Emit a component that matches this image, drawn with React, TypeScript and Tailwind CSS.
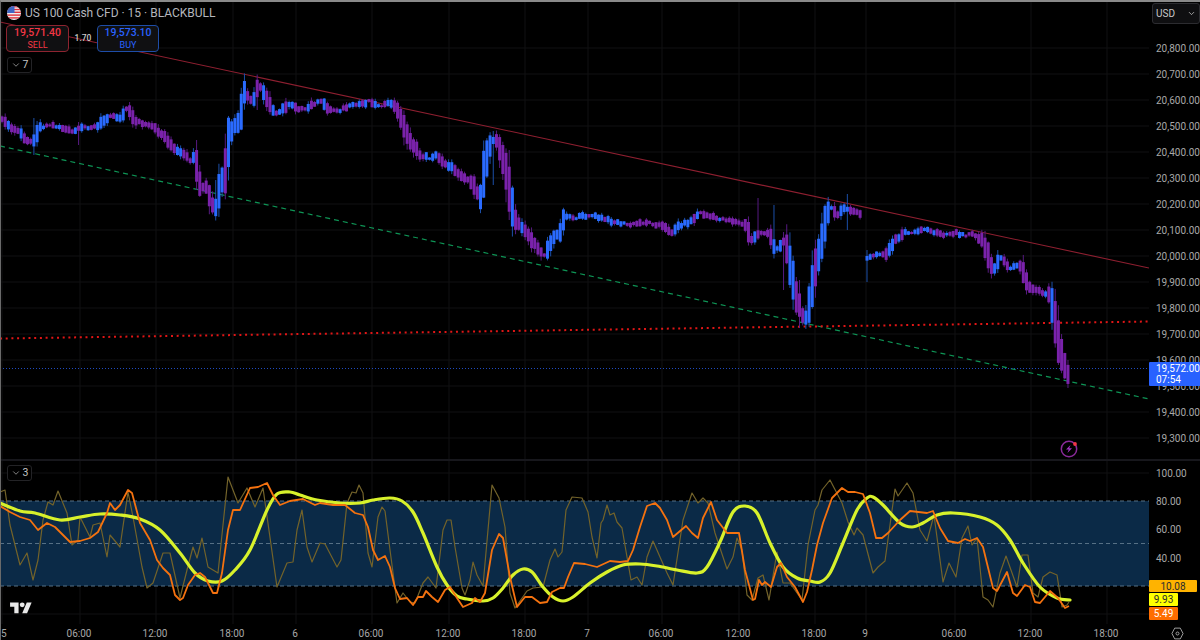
import { ChevronDown } from "lucide-react";

type Pt = [number, number];

const FONT = "font-['Roboto','Liberation_Sans',sans-serif]";

const PRICES = ["20,800.00", "20,700.00", "20,600.00", "20,500.00", "20,400.00", "20,300.00", "20,200.00", "20,100.00", "20,000.00", "19,900.00", "19,800.00", "19,700.00", "19,600.00", "19,500.00", "19,400.00", "19,300.00"];
const OSC_LABELS = ["100.00", "80.00", "60.00", "40.00"];

const TICKS: { x: number; label: string }[] = [
  { x: 2, label: "5" },
  { x: 80, label: "06:00" },
  { x: 156, label: "12:00" },
  { x: 233, label: "18:00" },
  { x: 296, label: "6" },
  { x: 372, label: "06:00" },
  { x: 449, label: "12:00" },
  { x: 525, label: "18:00" },
  { x: 588, label: "7" },
  { x: 662, label: "06:00" },
  { x: 739, label: "12:00" },
  { x: 815, label: "18:00" },
  { x: 866, label: "9" },
  { x: 955, label: "06:00" },
  { x: 1031, label: "12:00" },
  { x: 1107, label: "18:00" },
];

const PATH_A: Pt[] = [[2,119],[8,125],[14,130],[20,132],[25,138],[32,143],[40,127],[50,125],[60,127],[72,132],[85,127],[97,127],[110,115],[120,118],[127,108],[135,120],[145,125],[153,127],[165,137],[175,150],[184,155],[190,160],[195,158],[200,186],[207,188],[212,205],[216,208],[220,185],[225,175],[228,145],[232,130],[240,120],[245,90],[250,100],[255,100],[258,85],[262,90],[270,105],[274,112],[278,112],[285,108],[290,103],[298,108],[305,110],[315,103],[322,102],[330,110],[340,110],[345,108],[355,105],[365,103],[370,100],[375,105],[385,105],[392,103],[400,115],[405,130],[410,140],[420,155],[430,158],[435,155],[445,163],[455,170],[465,178],[472,182],[480,200],[485,165],[490,145],[495,138],[500,150],[505,165],[510,195],[515,220],[525,230],[535,245],[545,255],[552,240],[560,232],[565,215],[575,218],[590,215],[600,218],[615,222],[630,225],[645,222],[660,225],[672,232],[680,225],[690,222],[700,213],[715,218],[730,220],[745,225],[752,240],[760,232],[770,235],[775,250],[785,240],[790,265],[797,300],[805,320],[810,300],[815,270],[820,250],[825,225],[830,205],[838,215],[845,208],[855,212],[863,215]];
const PATH_B: Pt[] = [[867,258],[875,255],[885,255],[895,240],[905,232],[915,232],[925,230],[935,232],[945,235],[955,233],[965,235],[975,235],[982,240],[988,255],[993,272],[1000,258],[1010,268],[1020,265],[1028,285],[1040,292],[1050,295],[1055,320],[1060,350],[1066,370],[1070,381]];

const SPIKES: [number, number, number][] = [
  [35, 118, 155], [77, 122, 145], [195, 140, 190], [216, 180, 212], [258, 79, 110], [493, 131, 185], [510, 150, 220],
  [758, 198, 235], [775, 205, 258], [785, 232, 290], [801, 280, 328], [805, 305, 328], [829, 198, 225], [847, 194, 230], [848, 210, 243], [866, 250, 282], [1068, 360, 388],
];

const RED_LINE = { x1: 0, y1: 22, x2: 1149, y2: 268 };
const GREEN_LINE = { x1: 0, y1: 146, x2: 1149, y2: 399 };

const LIME: Pt[] = [[0,503],[20,511],[35,513],[60,520],[80,517],[100,514],[120,515],[140,519],[160,530],[180,553],[195,573],[208,581],[222,581],[235,570],[250,550],[267,510],[277,494],[290,492],[300,495],[317,500],[340,503],[360,503],[373,500],[390,498],[402,501],[413,512],[423,533],[437,567],[447,585],[457,596],[467,599],[483,601],[493,598],[503,588],[513,575],[523,569],[532,572],[543,587],[553,597],[563,601],[573,597],[590,583],[607,572],[623,565],[640,564],[657,566],[677,570],[697,573],[707,567],[720,542],[733,512],[745,506],[757,513],[770,543],[783,567],[797,578],[810,581],[820,582],[830,573],[843,543],[857,510],[867,498],[873,497],[883,505],[900,523],[912,527],[923,523],[937,515],[953,513],[980,517],[997,525],[1010,540],[1023,563],[1040,587],[1057,598],[1070,600]];
const ORANGE: Pt[] = [[0,506],[10,512],[20,517],[30,520],[38,530],[47,523],[55,527],[70,542],[80,541],[90,538],[98,532],[107,513],[110,503],[115,510],[120,505],[128,490],[132,493],[140,523],[150,540],[157,560],[163,568],[170,575],[175,595],[180,600],[183,598],[188,585],[195,575],[200,573],[205,577],[213,593],[217,593],[222,573],[228,530],[233,510],[240,510],[250,488],[258,487],[267,483],[273,495],[280,505],[290,501],[303,499],[315,505],[320,503],[333,505],[345,505],[355,513],[363,515],[368,527],[373,550],[378,560],[385,556],[390,567],[395,588],[400,599],[407,598],[413,605],[418,597],[423,597],[426,591],[432,597],[438,602],[445,590],[450,587],[457,598],[463,607],[472,603],[475,598],[480,602],[485,593],[492,550],[499,534],[503,538],[510,577],[517,607],[525,597],[532,597],[540,603],[547,602],[552,592],[560,588],[564,588],[568,577],[574,563],[585,564],[597,567],[610,561],[620,562],[628,561],[633,550],[640,527],[647,506],[655,503],[660,508],[667,520],[673,537],[686,526],[692,533],[698,538],[703,518],[711,502],[717,520],[727,533],[735,533],[739,533],[745,570],[753,600],[755,599],[759,580],[762,585],[765,582],[771,587],[777,567],[781,563],[787,577],[795,587],[803,602],[807,592],[812,570],[817,545],[823,523],[832,498],[842,488],[848,492],[855,492],[863,494],[870,513],[876,538],[882,538],[888,533],[900,520],[910,511],[927,513],[933,511],[940,528],[948,541],[958,543],[965,539],[970,541],[977,538],[983,547],[993,588],[997,591],[1007,572],[1013,593],[1017,596],[1025,585],[1030,587],[1035,602],[1040,603],[1050,591],[1058,598],[1065,608],[1069,606]];
const THIN: Pt[] = [[0,492],[5,490],[10,525],[20,565],[27,553],[33,580],[38,560],[43,520],[48,502],[53,505],[58,491],[67,513],[72,545],[78,540],[80,517],[90,537],[93,525],[100,523],[107,557],[110,535],[120,547],[128,492],[133,517],[142,567],[147,588],[153,583],[163,553],[170,553],[180,598],[187,570],[193,547],[197,558],[202,538],[208,567],[218,573],[228,477],[238,503],[247,488],[255,507],[263,488],[277,587],[287,563],[293,562],[297,530],[302,510],[307,547],[312,562],[320,543],[325,544],[337,567],[341,560],[347,503],[352,492],[356,493],[359,485],[363,493],[368,553],[372,567],[378,517],[382,507],[385,511],[390,550],[397,603],[403,593],[410,602],[415,603],[423,583],[428,577],[436,588],[443,530],[447,520],[451,520],[455,547],[462,588],[465,595],[470,580],[473,562],[477,575],[483,586],[492,485],[499,498],[505,527],[510,593],[515,608],[527,591],[533,588],[543,587],[550,560],[555,549],[558,557],[562,552],[566,510],[572,497],[582,498],[588,512],[592,537],[597,558],[601,523],[603,520],[607,505],[610,515],[614,513],[617,522],[622,528],[631,580],[637,577],[642,585],[647,557],[653,541],[660,557],[667,573],[673,585],[683,520],[692,493],[698,503],[703,498],[708,503],[715,533],[727,569],[733,557],[737,538],[742,550],[747,595],[752,600],[758,578],[763,575],[769,600],[777,552],[783,583],[790,583],[802,600],[808,545],[815,510],[818,505],[822,490],[830,480],[842,503],[848,522],[854,535],[857,528],[863,535],[873,573],[878,567],[885,561],[895,489],[898,496],[907,483],[913,493],[920,530],[927,541],[934,515],[943,582],[949,563],[956,577],[962,538],[968,526],[972,545],[977,538],[983,597],[988,600],[993,607],[1000,573],[1006,556],[1017,587],[1022,555],[1028,555],[1033,593],[1038,597],[1043,577],[1050,572],[1057,575],[1062,607],[1067,605],[1069,602]];

function pathOf(pts: Pt[]) {
  return pts.map(([x, y], i) => `${i ? "L" : "M"}${x} ${y}`).join("");
}

// catmull-rom, the slow line is smooth in the picture
function smooth(pts: Pt[]) {
  let d = `M${pts[0][0]} ${pts[0][1]}`;
  for (let i = 0; i < pts.length - 1; i++) {
    const p0 = pts[i - 1] ?? pts[i];
    const p1 = pts[i];
    const p2 = pts[i + 1];
    const p3 = pts[i + 2] ?? p2;
    const c1x = p1[0] + (p2[0] - p0[0]) / 6;
    const c1y = p1[1] + (p2[1] - p0[1]) / 6;
    const c2x = p2[0] - (p3[0] - p1[0]) / 6;
    const c2y = p2[1] - (p3[1] - p1[1]) / 6;
    d += `C${c1x} ${c1y} ${c2x} ${c2y} ${p2[0]} ${p2[1]}`;
  }
  return d;
}

function rnd(n: number) {
  const v = Math.sin(n * 12.9898) * 43758.5453;
  return v - Math.floor(v);
}

function at(path: Pt[], x: number) {
  if (x <= path[0][0]) return path[0][1];
  for (let i = 0; i < path.length - 1; i++) {
    const [x0, y0] = path[i];
    const [x1, y1] = path[i + 1];
    if (x >= x0 && x <= x1) return y0 + ((y1 - y0) * (x - x0)) / (x1 - x0);
  }
  return path[path.length - 1][1];
}

function buildCandles(path: Pt[], seed: number) {
  const out: { x: number; up: boolean; top: number; h: number; high: number; low: number }[] = [];
  const start = path[0][0];
  const end = path[path.length - 1][0];
  for (let x = start, i = 0; x <= end; x += 3.19, i++) {
    const delta = at(path, x + 3.19) - at(path, x - 3.19);
    const size = Math.abs(delta);
    const half = 0.8 + size * 0.55 + rnd(i + seed + 0.1) * 2;
    const mid = at(path, x) + (rnd(i + seed) - 0.5) * 2.5;
    const flip = size < 2 ? rnd(i + seed + 0.5) < 0.5 : rnd(i + seed + 0.5) < 0.15;
    const top = mid - half;
    const bottom = mid + half;
    let high = top - rnd(i + seed + 0.3) * (1.5 + size * 0.4);
    let low = bottom + rnd(i + seed + 0.7) * (1.5 + size * 0.4);
    const spike = SPIKES.find(([sx]) => Math.abs(sx - x) < 1.6);
    if (spike) {
      high = Math.min(high, spike[1]);
      low = Math.max(low, spike[2]);
    }
    out.push({ x, up: delta < 0 ? !flip : flip, top, h: bottom - top, high, low });
  }
  return out;
}

const CANDLES = [...buildCandles(PATH_A, 3), ...buildCandles(PATH_B, 500)];

function GridLines({ ys, top, bottom }: { ys: number[]; top: number; bottom: number }) {
  return (
    <g stroke="#111113" strokeWidth="1">
      {ys.map((y) => (
        <line key={y} x1="0" x2="1149" y1={y} y2={y} />
      ))}
      {TICKS.map((t) => (
        <line key={t.x} x1={t.x} x2={t.x} y1={top} y2={bottom} />
      ))}
    </g>
  );
}

function Candle({ c }: { c: (typeof CANDLES)[number] }) {
  return (
    <g>
      <line x1={c.x} x2={c.x} y1={c.high} y2={c.low} stroke={c.up ? "#1b4fa8" : "#561a80"} strokeWidth="1" />
      <rect x={c.x - 1.5} y={c.top} width="3" height={c.h} fill={c.up ? "#2a6bff" : "#7a22ab"} />
    </g>
  );
}

function PriceChart() {
  return (
    <svg viewBox="1 2 1148 457" className="block h-full w-full">
      <GridLines ys={PRICES.map((_, i) => 48 + i * 26)} top={2} bottom={459} />
      <line {...RED_LINE} stroke="#8e1f30" strokeWidth="1.1" />
      <line {...GREEN_LINE} stroke="#0e9455" strokeWidth="1.2" strokeDasharray="5 4" />
      <line x1="0" y1="338.5" x2="1149" y2="321.5" stroke="#e01616" strokeWidth="2" strokeDasharray="2 3.7" />
      <line x1="0" y1="368.5" x2="1149" y2="368.5" stroke="#1f4bc0" strokeWidth="1" strokeDasharray="1 2" />
      {CANDLES.map((c) => (
        <Candle key={c.x} c={c} />
      ))}
    </svg>
  );
}

function OscChart() {
  return (
    <svg viewBox="1 461 1148 163" className="block h-full w-full">
      <GridLines ys={[473, 529, 558, 614]} top={461} bottom={624} />
      <rect x="0" y="501" width="1149" height="85" fill="#0b2a47" />
      <g stroke="#567085" strokeWidth="1" strokeDasharray="4 3">
        <line x1="0" x2="1149" y1="501" y2="501" />
        <line x1="0" x2="1149" y1="543.5" y2="543.5" />
        <line x1="0" x2="1149" y1="586" y2="586" />
      </g>
      <path d={pathOf(THIN)} fill="none" stroke="#73632a" strokeWidth="1.2" strokeLinejoin="round" />
      <path d={smooth(LIME)} fill="none" stroke="#d8f12b" strokeWidth="3.2" strokeLinecap="round" />
      <path d={pathOf(ORANGE)} fill="none" stroke="#f5720f" strokeWidth="1.8" strokeLinejoin="round" />
    </svg>
  );
}

function UsFlag() {
  return (
    <svg viewBox="0 0 14 14" className="h-[14px] w-[14px] shrink-0">
      <defs>
        <clipPath id="flag-clip">
          <circle cx="7" cy="7" r="7" />
        </clipPath>
      </defs>
      <g clipPath="url(#flag-clip)">
        <rect width="14" height="14" fill="#f0f0f0" />
        <rect y="0" width="14" height="1.4" fill="#e0313c" />
        <rect y="2.8" width="14" height="1.4" fill="#e0313c" />
        <rect y="5.6" width="14" height="1.4" fill="#e0313c" />
        <rect y="8.4" width="14" height="1.4" fill="#e0313c" />
        <rect y="11.2" width="14" height="1.4" fill="#e0313c" />
        <rect width="7.5" height="7" fill="#3f67c5" />
      </g>
    </svg>
  );
}

function TradeBox({ price, label, tone }: { price: string; label: string; tone: "sell" | "buy" }) {
  const sell = tone === "sell";
  return (
    <div className={`flex h-[27px] flex-col items-center justify-center rounded-[4px] border bg-[#101012] leading-[12px] ${sell ? "w-[63px] border-[#8e2430] text-[#f23645]" : "w-[62px] border-[#1e4da8] text-[#2962ff]"}`}>
      <span className="text-[10.5px] font-medium">{price}</span>
      <span className="text-[9px]">{label}</span>
    </div>
  );
}

function Collapse({ n }: { n: number }) {
  return (
    <div className="flex h-[16px] w-[25px] items-center justify-center gap-[2px] rounded-[3px] border border-[#232326] bg-black text-[10.5px] text-[#c4c4c4]">
      <ChevronDown size={10} strokeWidth={1.6} />
      {n}
    </div>
  );
}

function FlashIcon() {
  return (
    <svg viewBox="0 0 20 20" className="absolute left-[1058px] top-[436px] h-[20px] w-[20px]">
      <circle cx="10" cy="11" r="7.7" fill="none" stroke="#8a2a9a" strokeWidth="1.5" />
      <path d="M11.5 7 7 11.6h2.8L8.4 15l4.6-4.8h-2.8z" fill="#a335c4" />
      <circle cx="16" cy="6" r="1.9" fill="#f23645" />
    </svg>
  );
}

function TvLogo() {
  return (
    <svg viewBox="0 0 36 28" className="absolute bottom-[7px] left-[8px] h-[17px] w-[24px]">
      <path d="M14 22H7V11H0V4h14v18zM28 22h-8l7.5-18h8L28 22z" fill="#e8e8e8" />
      <circle cx="20" cy="8" r="4" fill="#e8e8e8" />
    </svg>
  );
}

function SettingsIcon() {
  return (
    <svg viewBox="0 0 14 14" className="h-[13px] w-[13px]">
      <path d="M4 1.2h6L13 7l-3 5.8H4L1 7z" fill="none" stroke="#a8a8a8" strokeWidth="1" />
      <circle cx="7" cy="7" r="1.6" fill="none" stroke="#a8a8a8" strokeWidth="1" />
    </svg>
  );
}

export default function App() {
  return (
    <div className={`flex h-[640px] w-[1200px] flex-col overflow-hidden border-t-2 border-l border-t-[#8a8a8a] border-l-[#6a6a6a] bg-black ${FONT}`}>
      {/* price pane */}
      <div className="flex h-[457px] shrink-0">
        <div className="relative w-[1148px]">
          <PriceChart />
          <div className="absolute left-[5px] top-[3px] flex flex-col items-start">
            <div className="flex h-[15px] items-center gap-[4px] pl-[1px] text-[12px] leading-none text-[#b4b6bc]">
              <UsFlag />
              US 100 Cash CFD · 15 · BLACKBULL
            </div>
            <div className="mt-[5px] flex items-center">
              <TradeBox price="19,571.40" label="SELL" tone="sell" />
              <span className="w-[28px] text-center text-[8.5px] font-medium text-[#c9c9c9]">1.70</span>
              <TradeBox price="19,573.10" label="BUY" tone="buy" />
            </div>
            <div className="ml-[1px] mt-[5px]">
              <Collapse n={7} />
            </div>
          </div>
          <FlashIcon />
        </div>
        <div className="relative w-[51px] pl-[7px] pt-[33px] text-[10px] text-[#a8a8a8]">
          {PRICES.map((p) => (
            <div key={p} className="flex h-[26px] items-center">{p}</div>
          ))}
          <div className="absolute left-[3px] top-[1px] flex h-[21px] w-[48px] items-center justify-between rounded-[3px] border border-[#2c2c30] bg-[#0f0f11] px-[3px] text-[10px] text-[#c8c8c8]">
            USD
            <ChevronDown size={9} strokeWidth={2} />
          </div>
          <div className="absolute left-0 top-[360px] flex h-[24px] w-[51px] flex-col justify-center rounded-l-[1px] bg-[#2962ff] pl-[7px] leading-[11.5px] text-white">
            <span>19,572.00</span>
            <span>07:54</span>
          </div>
        </div>
      </div>

      <div className="h-[2px] shrink-0 bg-[#17171c]" />

      {/* oscillator pane */}
      <div className="flex h-[163px] shrink-0">
        <div className="relative w-[1148px]">
          <OscChart />
          <div className="absolute left-[6px] top-[4px]">
            <Collapse n={3} />
          </div>
          <TvLogo />
        </div>
        <div className="relative w-[51px] pl-[7px] text-[10px] text-[#a8a8a8]">
          <div className="-mt-[2px]">
            {OSC_LABELS.map((p) => (
              <div key={p} className="flex h-[28.3px] items-center">{p}</div>
            ))}
          </div>
          <div className="absolute left-0 top-[119px] flex flex-col items-start gap-[1px]">
            <div className="flex h-[12px] w-[48px] items-center justify-center rounded-[1px] bg-[#ffb300] text-[#2c2c2c]">10.08</div>
            <div className="flex h-[13px] w-[29px] items-center justify-center rounded-[1px] bg-[#ffff00] text-[#2c2c2c]">9.93</div>
            <div className="flex h-[13px] w-[29px] items-center justify-center rounded-[1px] bg-[#ff6d00] text-white">5.49</div>
          </div>
        </div>
      </div>

      {/* time axis */}
      <div className="flex h-[16px] shrink-0 items-center pt-[2px] text-[10px] text-[#a8a8a8]">
        <div className="flex w-[1148px]">
          {TICKS.map((t, i) => (
            <div key={t.x} className="flex" style={{ width: (TICKS[i + 1]?.x ?? 1149) - t.x }}>
              <span className={i === 0 ? "" : "-translate-x-1/2"}>{t.label}</span>
            </div>
          ))}
        </div>
        <div className="flex w-[51px] justify-center pl-[5px]">
          <SettingsIcon />
        </div>
      </div>
    </div>
  );
}
